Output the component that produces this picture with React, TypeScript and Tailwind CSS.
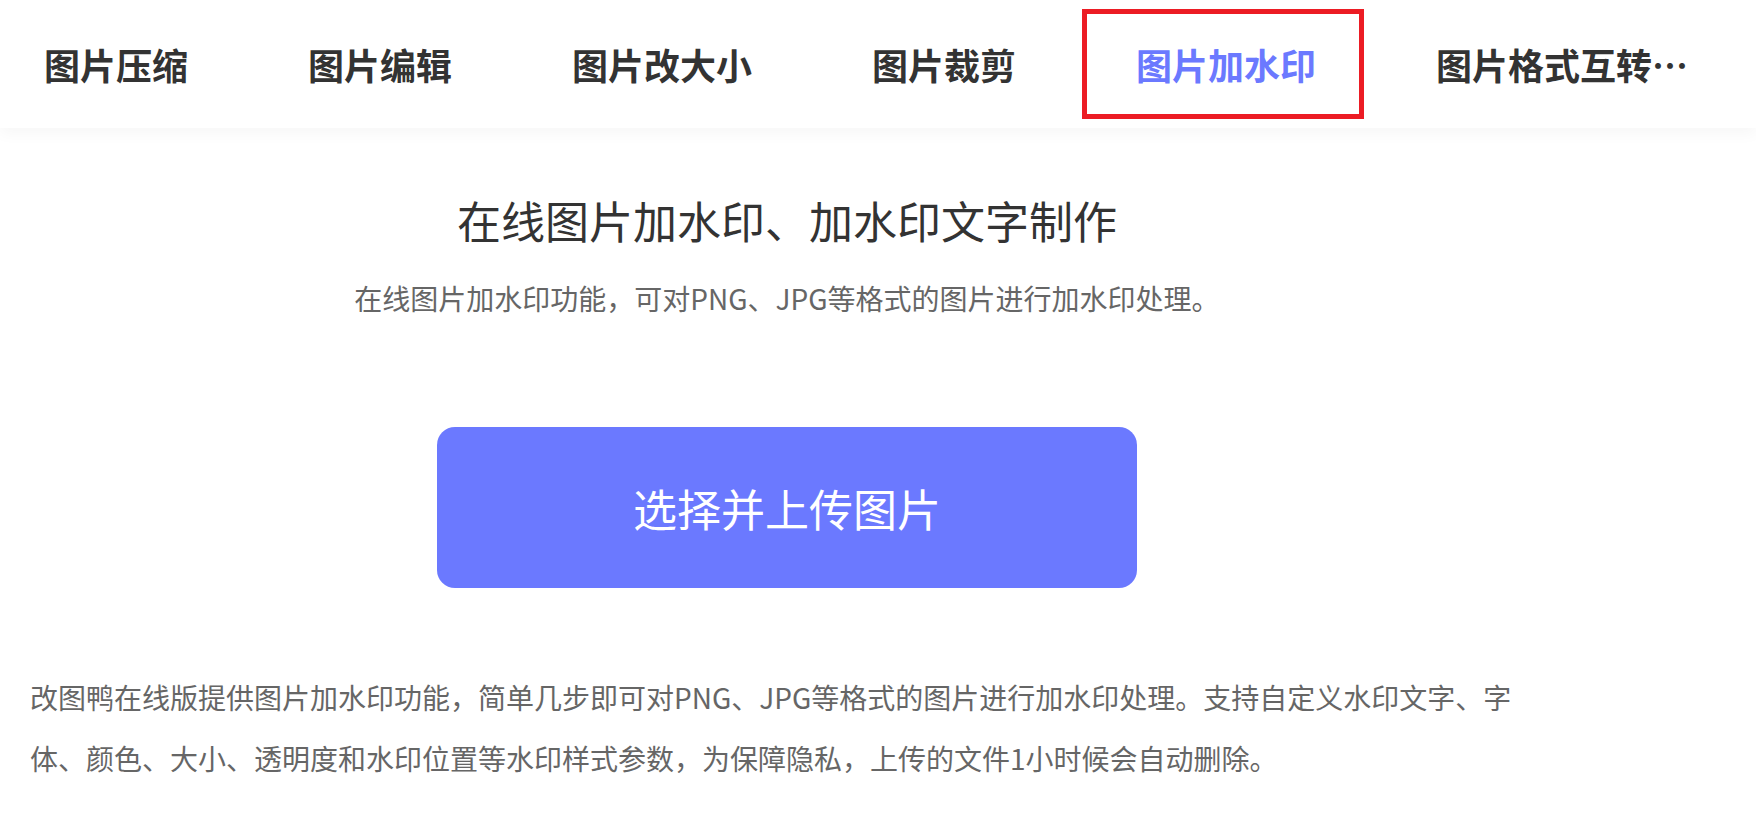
import React from "react";

const navItems = ["图片压缩", "图片编辑", "图片改大小", "图片裁剪", "图片加水印", "图片格式互转…"];

export default function App() {
  return (
    <div
      className="min-h-[832px] w-[1756px] bg-white"
      style={{ fontFamily: '"Microsoft YaHei", "Noto Sans CJK SC", "Noto Sans", sans-serif' }}
    >
      <nav className="relative z-10 flex h-[128px] items-center gap-[120px] bg-white pl-[44px] shadow-[0_6px_14px_rgba(0,0,0,0.035)]">
        {navItems.map((item) => {
          const active = item === "图片加水印";
          return (
            <div
              key={item}
              className={
                active
                  ? "relative whitespace-nowrap text-[36px] font-bold leading-[48px] text-[#6b79ff]"
                  : "relative whitespace-nowrap text-[36px] font-bold leading-[48px] text-[#333333]"
              }
            >
              {item}
              {active && (
                <span className="pointer-events-none absolute -left-[54px] -right-[48px] -top-[31px] -bottom-[31px] border-[5px] border-[#ec1c24]" />
              )}
            </div>
          );
        })}
      </nav>

      <main className="w-[1574px]">
        <h1 className="mt-[62px] text-center text-[44px] font-normal leading-[60px] text-[#333333]">
          在线图片加水印、加水印文字制作
        </h1>
        <p className="mt-[28px] text-center text-[28px] leading-[40px] text-[#666666]">
          在线图片加水印功能，可对PNG、JPG等格式的图片进行加水印处理。
        </p>
        <div className="mt-[109px] flex justify-center">
          <button className="flex h-[161px] w-[700px] items-center justify-center rounded-[18px] bg-[#6b79ff] text-[44px] font-normal text-white">
            选择并上传图片
          </button>
        </div>
        <p className="mt-[79px] px-[30px] text-left text-[28px] leading-[61px] text-[#666666]">
          改图鸭在线版提供图片加水印功能，简单几步即可对PNG、JPG等格式的图片进行加水印处理。支持自定义水印文字、字
          <br />
          体、颜色、大小、透明度和水印位置等水印样式参数，为保障隐私，上传的文件1小时候会自动删除。
        </p>
      </main>
    </div>
  );
}
